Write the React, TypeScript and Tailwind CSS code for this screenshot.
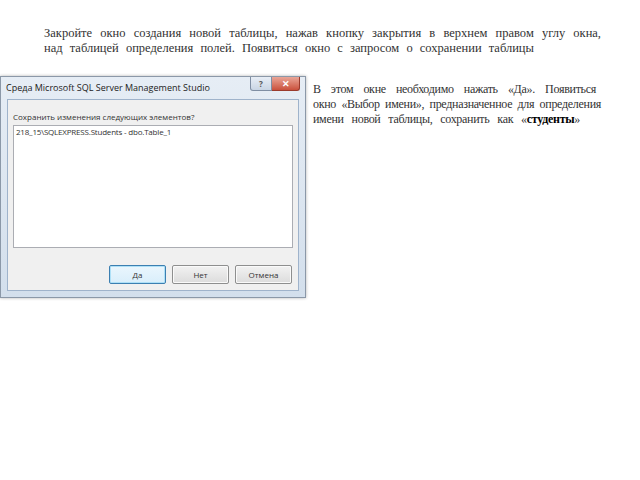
import React from "react";

const serif = { fontFamily: '"Liberation Serif", "Times New Roman", serif' };
const ui = { fontFamily: '"Open Sans", "Noto Sans", sans-serif' };

function Btn({ label, primary }: { label: string; primary?: boolean }) {
  return (
    <div
      className={
        "flex h-[19px] w-[57px] items-center justify-center rounded-[2px] border text-[8px] text-[#333] " +
        (primary
          ? "border-[#3c7fb1] bg-gradient-to-b from-[#eaf6fd] to-[#d9eefb] shadow-[inset_0_0_0_1px_#aee0f7]"
          : "border-[#8e8f8f] bg-gradient-to-b from-[#f2f2f2] to-[#dcdcdc] shadow-[inset_0_0_0_1px_#fafafa]")
      }
      style={ui}
    >
      {label}
    </div>
  );
}

export default function App() {
  return (
    <div className="relative h-[480px] w-[640px] overflow-hidden bg-white">
      <div className="pl-[44px] pt-[26px] text-[12.5px] leading-[15px] text-[#333]" style={serif}>
        <div className="w-[557px] text-justify [text-align-last:justify] [word-spacing:3px]">
          Закройте окно создания новой таблицы, нажав кнопку закрытия в верхнем правом углу окна,
        </div>
        <div className="[word-spacing:4px]">
          над таблицей определения полей. Появиться окно с запросом о сохранении таблицы
        </div>
      </div>

      <div className="mt-[20px] flex">
        <div className="flex h-[222px] w-[306px] shrink-0 flex-col border border-[#8b98a8] bg-gradient-to-b from-[#e6edf5] to-[#d3dfec] shadow-[0_0_3px_rgba(0,0,0,0.3)]">
          <div className="flex h-[22px] items-start">
            <div className="pl-[5px] pt-[4px] text-[9px] text-[#222]" style={ui}>
              Среда Microsoft SQL Server Management Studio
            </div>
            <div className="ml-auto mr-[5px] flex">
              <div className="flex h-[14px] w-[22px] items-center justify-center rounded-bl-[3px] border border-t-0 border-[#7f8ea3] bg-gradient-to-b from-[#e8eef6] to-[#c9d5e4] text-[8px] font-bold text-[#555]" style={ui}>
                ?
              </div>
              <div className="flex h-[14px] w-[28px] items-center justify-center rounded-br-[3px] border border-l-0 border-t-0 border-[#9a3a2c] bg-gradient-to-b from-[#e9a597] to-[#c9503c] text-[9px] font-bold text-white" style={ui}>
                ✕
              </div>
            </div>
          </div>
          <div className="mx-[6px] mb-[6px] flex flex-1 flex-col border border-[#9fb3cb] bg-[#f0f0f0] px-[5px]" style={ui}>
            <div className="pt-[11px] text-[8px] leading-[12px] text-[#333]">Сохранить изменения следующих элементов?</div>
            <div className="mt-[2px] h-[123px] border border-[#abadb3] bg-white px-[2px] text-[8px] leading-[12px] tracking-[-0.2px] text-[#333]">
              218_15\SQLEXPRESS.Students - dbo.Table_1
            </div>
            <div className="mt-[17px] flex justify-end gap-[6px] pr-[1px]">
              <Btn label="Да" primary />
              <Btn label="Нет" />
              <Btn label="Отмена" />
            </div>
          </div>
        </div>

        <div className="ml-[7px] w-[288px] shrink-0 whitespace-nowrap pt-[6px] text-[12px] leading-[15px] tracking-[-0.3px] text-[#333]" style={serif}>
          <div className="w-[283px] text-justify [text-align-last:justify]">
            В этом окне необходимо нажать «Да». Появиться
          </div>
          <div className="text-justify [text-align-last:justify]">
            окно «Выбор имени», предназначенное для определения
          </div>
          <div className="w-[267px] text-justify [text-align-last:justify]">
            имени новой таблицы, сохранить как «<b className="text-black">студенты</b>»
          </div>
        </div>
      </div>
    </div>
  );
}
